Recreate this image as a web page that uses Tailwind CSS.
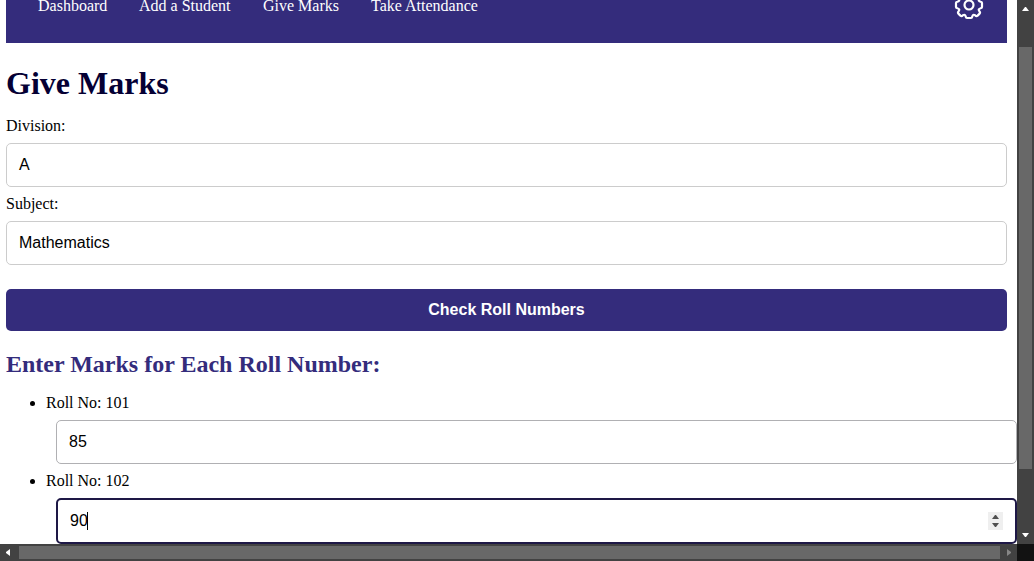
<!DOCTYPE html>
<html lang="en">
<head>
<meta charset="utf-8">
<title>Give Marks</title>
<script src="https://cdn.jsdelivr.net/npm/@tailwindcss/browser@4"></script>
</head>
<body class="h-[561px] w-[1034px] overflow-hidden bg-white font-['Liberation_Serif','Times_New_Roman',serif] text-base text-black">
<div class="grid h-[561px] grid-cols-[1017px_17px] grid-rows-[544px_17px]">
  <main class="overflow-hidden pl-[6px]">
    <nav class="flex h-[43px] w-[1001px] items-start justify-between bg-[#342c7c] pr-[23px] pl-8 text-white">
      <ul class="-mt-[5px] flex gap-8 leading-[22px]">
        <li class="w-[69px] whitespace-nowrap">Dashboard</li>
        <li class="w-[92px] whitespace-nowrap">Add a Student</li>
        <li class="w-[76px] whitespace-nowrap">Give Marks</li>
        <li class="whitespace-nowrap">Take Attendance</li>
      </ul>
      <svg class="-mt-[10px] size-[30px]" viewBox="-15 -15 30 30" fill="none" stroke="currentColor" stroke-width="2.2" stroke-linejoin="round">
        <circle r="4.5"/>
        <path d="M-2-13H2Q3-13 3.2-11.8 3.9-8.8 6-10.2 7.4-11.6 8.6-10.6L10.6-8.6Q11.6-7.4 10.2-6 8.8-3.9 11.8-3.2 13-3 13-2V2Q13 3 11.8 3.2 8.8 3.9 10.2 6 11.6 7.4 10.6 8.6L8.6 10.6Q7.4 11.6 6 10.2 3.9 8.8 3.2 11.8 3 13 2 13H-2Q-3 13-3.2 11.8-3.9 8.8-6 10.2-7.4 11.6-8.6 10.6L-10.6 8.6Q-11.6 7.4-10.2 6-8.8 3.9-11.8 3.2-13 3-13 2V-2Q-13-3-11.8-3.2-8.8-3.9-10.2-6-11.6-7.4-10.6-8.6L-8.6-10.6Q-7.4-11.6-6-10.2-3.9-8.8-3.2-11.8-3-13-2-13Z"/>
      </svg>
    </nav>
    <h1 class="mt-[22px] h-[37px] text-[32px] leading-[37px] font-bold text-[#050034]">Give Marks</h1>
    <label class="mt-[15px] block h-[18px] leading-[18px]">Division:</label>
    <div class="mt-[8px] flex h-[44px] w-[1001px] items-center rounded-[5px] border border-[#ccc] px-3 font-['Liberation_Sans',Arial,sans-serif]">A</div>
    <label class="mt-[8px] block h-[18px] leading-[18px]">Subject:</label>
    <div class="mt-[8px] flex h-[44px] w-[1001px] items-center rounded-[5px] border border-[#ccc] px-3 font-['Liberation_Sans',Arial,sans-serif]">Mathematics</div>
    <button class="mt-6 block h-[42px] w-[1001px] rounded-[5px] bg-[#342c7c] font-['Liberation_Sans',Arial,sans-serif] font-bold text-white">Check Roll Numbers</button>
    <h2 class="mt-[20px] h-[27px] text-2xl leading-[27px] font-bold text-[#342c7c]">Enter Marks for Each Roll Number:</h2>
    <ul class="mt-[16px] list-disc pl-10">
      <li class="h-[78px] leading-[18px]">Roll No: 101
        <div class="mt-[8px] ml-[10px] flex h-[44px] w-[961px] items-center rounded-[5px] border border-[#b0b0b3] px-3 font-['Liberation_Sans',Arial,sans-serif]">85</div>
      </li>
      <li class="leading-[18px]">Roll No: 102
        <div class="mt-[8px] ml-[10px] flex h-[46px] w-[961px] items-center rounded-[5px] border-2 border-[#1e1846] px-3 font-['Liberation_Sans',Arial,sans-serif]">
          <span>90</span><span class="-ml-px h-[18px] w-px bg-black"></span>
          <span class="ml-auto flex h-[18px] w-[15px] items-center justify-center bg-[#efefef]">
            <svg class="h-[12px] w-[7px]" viewBox="0 0 7 12" fill="#505050"><path d="M0 4 3 0H4L7 4ZM0 8H7L4 12H3Z"/></svg>
          </span>
        </div>
      </li>
    </ul>
  </main>
  <div class="flex flex-col items-center bg-[#424242]">
    <svg class="h-[47px] w-[17px] shrink-0" viewBox="0 0 17 47" fill="#fff"><path d="M5 11 8 7H9L12 11Z"/></svg>
    <div class="h-[422px] w-[13px] shrink-0 bg-[#686868]"></div>
    <svg class="mt-auto h-[17px] w-[17px]" viewBox="0 0 17 17" fill="#fff"><path d="M5 6H12L9 10H8Z"/></svg>
  </div>
  <div class="flex items-center bg-[#424242]">
    <svg class="h-[17px] w-[19px]" viewBox="0 0 19 17" fill="#fff"><path d="M10 5V12L6 9V8Z"/></svg>
    <div class="h-[13px] w-[981px] bg-[#686868]"></div>
    <svg class="h-[17px] w-[17px]" viewBox="0 0 17 17" fill="#868686"><path d="M7 5V12L11 9V8Z"/></svg>
  </div>
  <div class="bg-[#121212]"></div>
</div>
</body>
</html>
